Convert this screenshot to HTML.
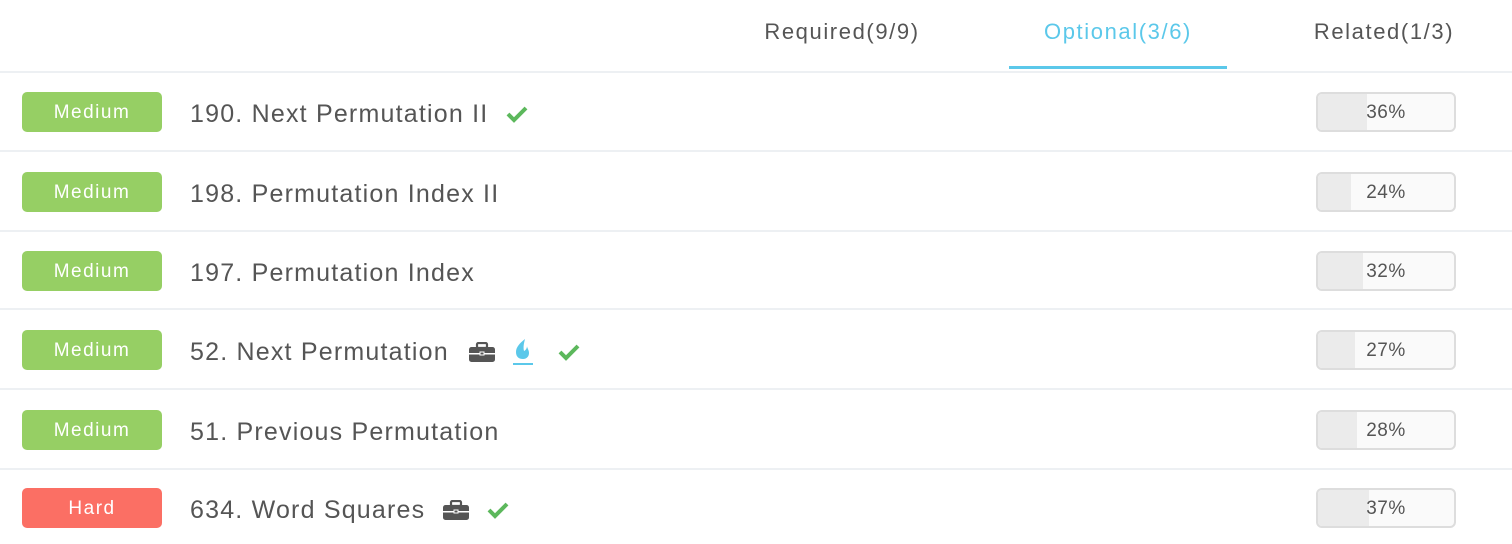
<!DOCTYPE html>
<html><head><style>
body{margin:0;width:1512px;height:544px;background:#fff;font-family:"Liberation Sans",sans-serif;position:relative;overflow:hidden}
.tab{position:absolute;top:19px;font-size:22px;color:#555;text-align:center;width:218px;letter-spacing:1.6px}
.ul{position:absolute;left:1009px;top:66px;width:218px;height:3px;background:#5bc8ea}
.sep{position:absolute;left:0;width:1512px;height:2px;background:#edf0f3}
.row{position:absolute;left:0;width:1512px;height:40px}
.badge{position:absolute;left:22px;top:0;width:140px;height:40px;border-radius:5px;background:#96cf64;color:#fff;font-size:19px;line-height:42px;text-align:center;letter-spacing:1.5px}
.hard{background:#fb6f64}
.title{position:absolute;left:190px;top:2px;line-height:40px;font-size:25px;color:#555;white-space:nowrap;display:flex;align-items:center;letter-spacing:1.2px}
.bar{position:absolute;left:1316px;top:0;width:136px;height:36px;border:2px solid #ddd;border-radius:6px;background:#fafafa;overflow:hidden}
.fill{position:absolute;left:0;top:0;height:36px;background:#ebebeb}
.pct{position:absolute;left:0;top:1px;width:100%;text-align:center;line-height:36px;font-size:19px;color:#555;letter-spacing:0.5px}
.ic{margin-left:18px;display:inline-block}
</style></head><body>
<div class="tab" style="left:733px">Required(9/9)</div>
<div class="tab" style="left:1009px;color:#5bc8ea">Optional(3/6)</div>
<div class="tab" style="left:1275px">Related(1/3)</div>
<div class="sep" style="top:71px"></div>
<div class="ul"></div>
<div class="sep" style="top:150px"></div>
<div class="sep" style="top:230px"></div>
<div class="sep" style="top:308px"></div>
<div class="sep" style="top:388px"></div>
<div class="sep" style="top:468px"></div>

<svg width="0" height="0" style="position:absolute"><defs>
<symbol id="chk" viewBox="0 0 22 18"><path d="M2 9l6 6L20 3" stroke="#5cb85c" stroke-width="4" fill="none"/></symbol>
<symbol id="bag" viewBox="0 0 26 20"><rect x="8" y="1" width="10" height="5" rx="1.5" fill="none" stroke="#555" stroke-width="2.2"/><rect x="0" y="5" width="26" height="15" rx="2.5" fill="#555"/><rect x="0" y="11" width="26" height="1.5" fill="#fff"/><rect x="10.5" y="9.5" width="5" height="4" fill="#fff"/><rect x="11.5" y="10.5" width="3" height="2" fill="#555"/></symbol>
</defs></svg>

<div class="row" style="top:92px"><div class="badge">Medium</div><div class="title">190. Next Permutation II<svg class="ic" width="22" height="18" style="margin-left:18px"><use href="#chk"/></svg></div><div class="bar"><div class="fill" style="width:49px"></div><div class="pct">36%</div></div></div>
<div class="row" style="top:172px"><div class="badge">Medium</div><div class="title">198. Permutation Index II</div><div class="bar"><div class="fill" style="width:33px"></div><div class="pct">24%</div></div></div>
<div class="row" style="top:251px"><div class="badge">Medium</div><div class="title">197. Permutation Index</div><div class="bar"><div class="fill" style="width:45px"></div><div class="pct">32%</div></div></div>
<div class="row" style="top:330px"><div class="badge">Medium</div><div class="title">52. Next Permutation<svg class="ic" width="26" height="20" style="margin-left:20px"><use href="#bag"/></svg><svg class="ic" width="22" height="28" viewBox="0 0 22 28" style="margin-left:17px"><path d="M13 1C8 5 4 9 4 14c0 5 3 7 7 7 4 0 6-3 6-6 0-3-2-5-2-7 0 2-1 4-3 5-1-4 0-8 1-12z" fill="#5bc8ea"/><rect x="1" y="25" width="20" height="2" fill="#5bc8ea"/></svg><svg class="ic" width="22" height="18" style="margin-left:24px"><use href="#chk"/></svg></div><div class="bar"><div class="fill" style="width:37px"></div><div class="pct">27%</div></div></div>
<div class="row" style="top:410px"><div class="badge">Medium</div><div class="title">51. Previous Permutation</div><div class="bar"><div class="fill" style="width:39px"></div><div class="pct">28%</div></div></div>
<div class="row" style="top:488px"><div class="badge hard">Hard</div><div class="title">634. Word Squares<svg class="ic" width="26" height="20"><use href="#bag"/></svg><svg class="ic" width="22" height="18"><use href="#chk"/></svg></div><div class="bar"><div class="fill" style="width:51px"></div><div class="pct">37%</div></div></div>
</body></html>
